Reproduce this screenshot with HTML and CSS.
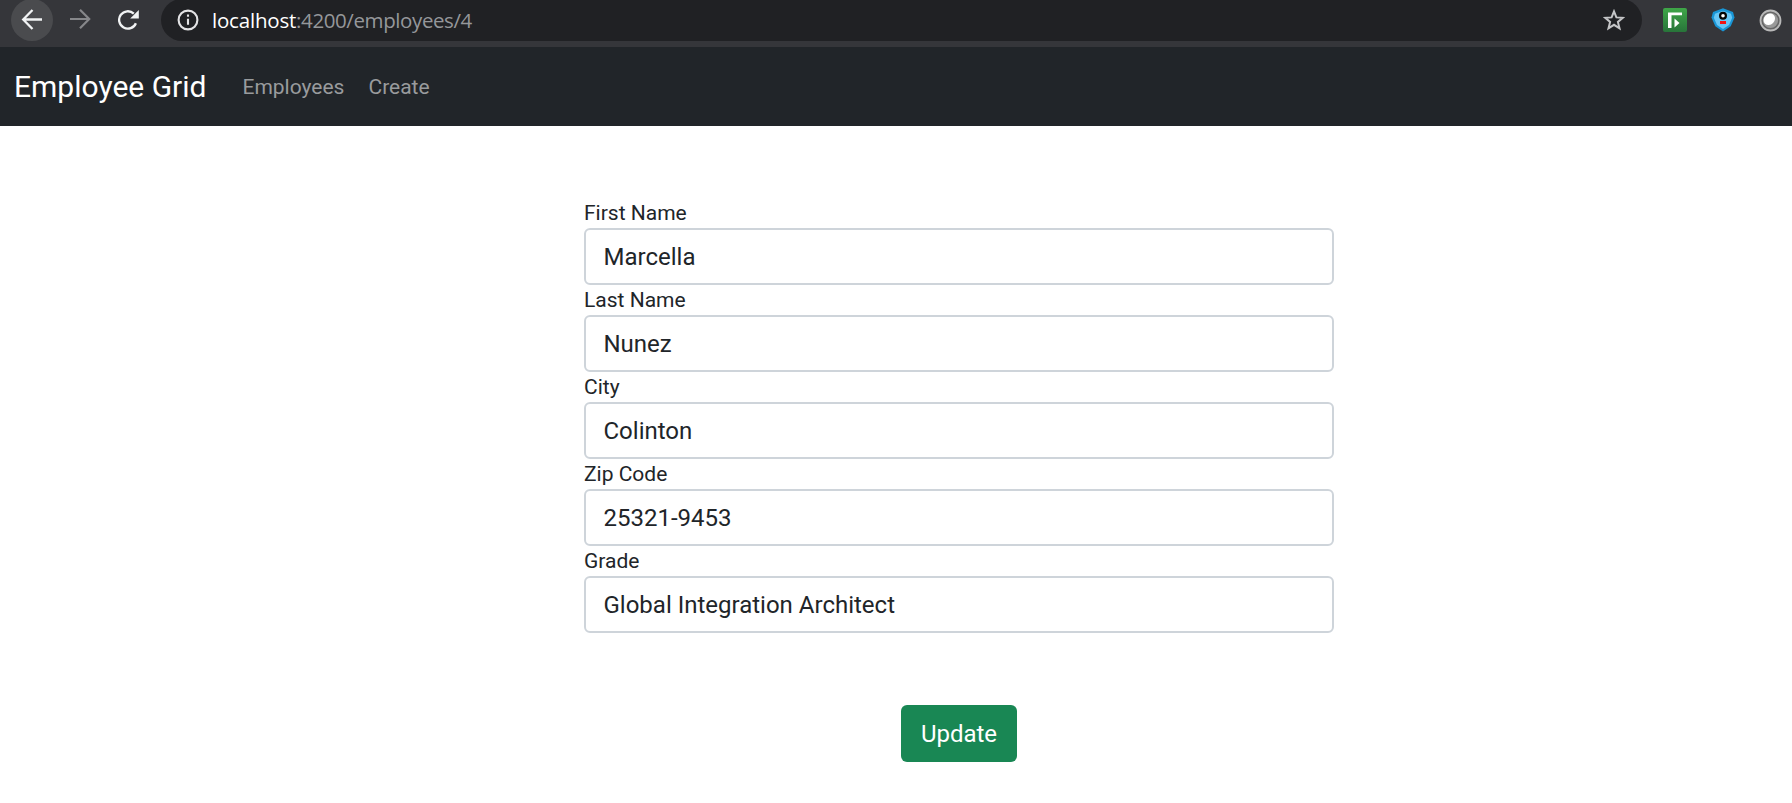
FILE: index.html
```html
<!DOCTYPE html>
<html lang="en">
<head>
<meta charset="utf-8">
<title>Employee Grid</title>
<link rel="stylesheet" href="styles.css">
</head>
<body>
<header class="browser">
  <span class="back"><svg width="42" height="42" viewBox="0 0 42 42"><path d="M31 20.500H12.500M21.500 11l-9.300 9.500 9.300 9.500"/></svg></span>
  <svg class="forward" width="22" height="20" viewBox="0 0 22 20"><path d="M0 10h18.5M10 .8l9.2 9.2-9.2 9.2"/></svg>
  <svg class="reload" width="22" height="20" viewBox="0 0 22 20"><path d="M17.9 13.2A8.7 8.7 0 1 1 15.8 3.6"/><path class="solid" d="M20.8 0v8.6h-8.6z"/></svg>
  <div class="address">
    <svg class="info" width="22" height="22" viewBox="0 0 22 22"><circle cx="11" cy="11" r="9.4"/><path d="M11 9.8v6M11 5.5v2.3"/></svg>
    <span class="url"><b>localhost</b>:4200/employees/4</span>
    <svg class="star" width="22" height="22" viewBox="0 0 22 22"><path d="M11 2.4l2.4 6 6.4.4-4.9 4.1 1.6 6.4-5.5-3.5-5.5 3.5 1.6-6.4-4.9-4.1 6.4-.4z"/></svg>
  </div>
  <svg class="ext-green" width="24" height="24" viewBox="0 0 24 24">
    <defs><linearGradient id="green" x2="0" y2="1"><stop stop-color="#3fa648"/><stop offset="1" stop-color="#28743a"/></linearGradient></defs>
    <rect width="24" height="24" rx="2" fill="url(#green)"/><path d="M5 4.500h14v2.700H8.500V20H5z" fill="#fff"/><path d="M11.500 10.500l5 4.500-5 4.500z" fill="#fff"/>
  </svg>
  <svg class="ext-blue" width="24" height="24" viewBox="0 0 24 24">
    <path d="M12 .300L22 4l1.500 5.500-3.800 8.700L12 23.500l-7.700-5.300L.500 9.500 2 4z" fill="#1996d6"/><path d="M12 2.800l8 3 1.200 3.900-3.200 7.200-6 4-6-4-3.200-7.200L4 5.800z" fill="#67c6f5"/><circle cx="12" cy="7.800" r="2.900" fill="#fff" stroke="#050505" stroke-width="2.200"/><path d="M9 13h6v3H9z" fill="#f01414"/>
  </svg>
  <svg class="ext-grey" width="23" height="23" viewBox="0 0 23 23">
    <circle cx="11.500" cy="11.500" r="10" fill="#666" stroke="#b9b9b9" stroke-width="1.800"/><circle cx="11.500" cy="11.500" r="7.600" fill="#999"/><ellipse cx="10.300" cy="10.300" rx="6.200" ry="5.300" transform="rotate(-45 10.300 10.300)" fill="#fff"/>
  </svg>
</header>
<nav class="navbar">
  <a class="brand">Employee Grid</a>
  <a class="link">Employees</a>
  <a class="link">Create</a>
</nav>
<main>
  <form class="form">
    <label for="first">First Name</label>
    <input id="first" type="text" value="Marcella">
    <label for="last">Last Name</label>
    <input id="last" type="text" value="Nunez">
    <label for="city">City</label>
    <input id="city" type="text" value="Colinton">
    <label for="zip">Zip Code</label>
    <input id="zip" type="text" value="25321-9453">
    <label for="grade">Grade</label>
    <input id="grade" type="text" value="Global Integration Architect">
    <button type="button">Update</button>
  </form>
</main>
</body>
</html>
```
FILE: styles.css
```css
* { box-sizing: border-box; }
body {
  margin: 0;
  height: 803px;
  overflow: hidden;
  background: #fff;
  color: #212529;
  font-family: Roboto, sans-serif;
}
svg { display: block; flex: none; fill: none; }
.browser {
  display: flex;
  align-items: flex-start;
  height: 47px;
  background: #35363a;
}
.back {
  width: 42px;
  height: 42px;
  margin: -1px 0 0 11px;
  border-radius: 50%;
  background: #4a4b4e;
}
.back path { stroke: #f1f3f4; stroke-width: 2.3; }
.forward { margin: 9px 0 0 17px; }
.forward path { stroke: #86878a; stroke-width: 2.2; }
.reload { margin: 10px 0 0 26px; }
.reload path { stroke: #f1f3f4; stroke-width: 2.3; }
.reload .solid { fill: #f1f3f4; stroke: none; }
.address {
  display: flex;
  align-items: flex-start;
  width: 1481px;
  height: 42px;
  margin: -1px 0 0 21px;
  padding: 0 17px 0 16px;
  border-radius: 21px;
  background: #202124;
}
.info { margin-top: 10px; }
.info path, .info circle { stroke: #e3e3e5; stroke-width: 2.1; }
.url {
  flex: 1;
  margin-left: 13px;
  color: #95979a;
  font: 20.5px/42px "Open Sans", sans-serif;
  letter-spacing: -0.4px;
}
.url b { color: #fff; font-weight: 400; letter-spacing: -0.2px; }
.star { margin-top: 10px; }
.star path { stroke: #c4c5c7; stroke-width: 2; }
.ext-green { margin: 8px 0 0 21px; }
.ext-blue { margin: 8px 0 0 24px; }
.ext-grey { margin: 9px 0 0 24px; }
.navbar {
  display: flex;
  align-items: center;
  height: 79px;
  padding-left: 14px;
  background: #212529;
}
.brand { margin-right: 36px; color: #fff; font-size: 30px; }
.link { margin-right: 24px; color: #999b9d; font-size: 21px; }
.form {
  display: flex;
  flex-direction: column;
  width: 750px;
  margin: 72px 0 0 584px;
}
label { height: 30px; font-size: 21px; line-height: 30px; }
input {
  height: 57px;
  padding: 0 17.5px;
  border: 2px solid #ced4da;
  border-radius: 6px;
  background: #fff;
  color: #212529;
  font: 24px Roboto, sans-serif;
}
button {
  align-self: center;
  width: 116px;
  height: 57px;
  margin-top: 72px;
  padding: 0;
  border: 0;
  border-radius: 6px;
  background: #198754;
  color: #fff;
  font: 24px Roboto, sans-serif;
}
```
